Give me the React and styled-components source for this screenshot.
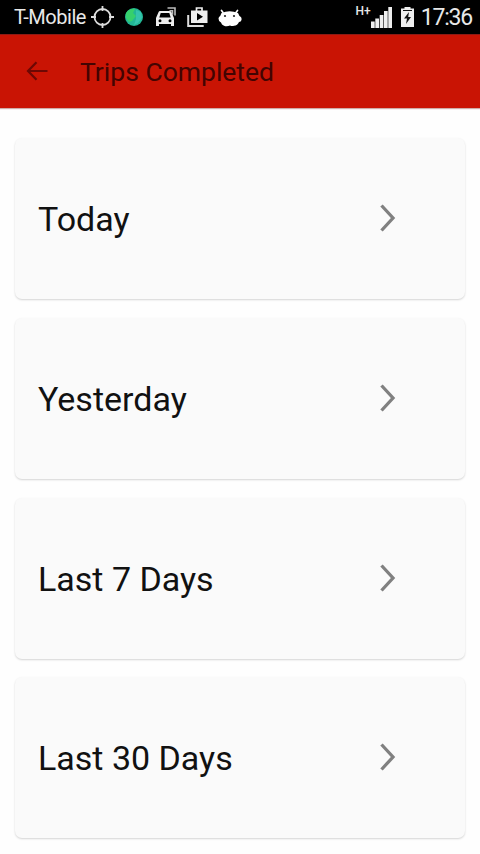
import React, {useState} from 'react';
import styled, {createGlobalStyle} from 'styled-components';

const GlobalStyle = createGlobalStyle`
* {
box-sizing: border-box;
}

body {
margin: 0;
background: #fefefe;
font-family: Roboto, sans-serif;
}
`;

const Screen = styled.div`
width: 480px;
height: 854px;
overflow: hidden;
display: flex;
flex-direction: column;
`;

const StatusBar = styled.div`
height: 34px;
flex: none;
display: flex;
align-items: center;
padding: 0 8px 0 14px;
background: #000;
color: #e8e8e8;
`;

const Carrier = styled.span`
width: 77px;
font-size: 20px;
line-height: 35px;
letter-spacing: -0.45px;
white-space: nowrap;
`;

const StatusIcons = styled.div`
display: flex;
align-items: center;
gap: 8px;
`;

const StatusRight = styled.div`
display: flex;
align-items: center;
margin-left: auto;
`;

const NetworkType = styled.span`
align-self: flex-start;
margin-top: 4px;
font-size: 12px;
line-height: 14px;
font-weight: 500;
`;

const Icon = styled.svg`
display: block;
flex: none;
margin-left: ${props => props.$left || 0}px;
`;

const Clock = styled.span`
margin-left: 7px;
font-size: 23px;
line-height: 35px;
letter-spacing: -1.2px;
white-space: nowrap;
`;

const Header = styled.header`
height: 74px;
flex: none;
display: flex;
align-items: center;
padding-left: 26px;
background: #c91404;
border-top: 1px solid #8e1a14;
box-shadow: 0 1px 1px rgba(120, 20, 10, 0.35);
`;

const BackButton = styled.button`
display: flex;
padding: 0 0 2px;
border: 0;
background: none;
`;

const Title = styled.h1`
margin: 0 0 0 32px;
font-size: 26.5px;
line-height: 32px;
font-weight: 400;
color: #430402;
white-space: nowrap;
`;

const TripsList = styled.main`
display: flex;
flex-direction: column;
gap: 18.8px;
padding: 30px 15px 0;
`;

const TripsCard = styled.div`
height: 161px;
flex: none;
display: flex;
align-items: center;
justify-content: space-between;
padding: 0 69px 0 23px;
border-radius: 7px;
background: #fafafa;
box-shadow: 0 1px 2px rgba(0, 0, 0, 0.17);
`;

const TripsLabel = styled.span`
padding-top: 1px;
font-size: 34px;
line-height: 40px;
color: #111;
white-space: nowrap;
`;

const ChevronWrapper = styled.div`
padding-bottom: 1px;
`;

const periods = ['Today', 'Yesterday', 'Last 7 Days', 'Last 30 Days'];

const LocationIcon = () => (
    <Icon width="23" height="24" viewBox="0 0 23 24" fill="none" stroke="#ddd" strokeWidth="1.800">
        <circle cx="11.5" cy="12" r="8"/>
        <path d="M11.5 1v5M11.5 18v5M0 12h5M18 12h5"/>
    </Icon>
);

const GlobeIcon = () => (
    <Icon width="20" height="20" viewBox="0 0 20 20" $left={2}>
        <circle cx="10" cy="10" r="9" fill="#22b795"/>
        <path d="M2 6q4-5 9-4l-2 4 3 3-4 5-3 1-3-4z" fill="#36d06c"/>
        <path d="M12 3l5 2 1 6-4 5-4 2 2-6z" fill="#35c4ad"/>
    </Icon>
);

const CarIcon = () => (
    <Icon width="21" height="20" viewBox="0 0 21 20" $left={4}>
        <path fill="#eee" fillRule="evenodd" d="M4 4h10q1 0 1.400 1L18 11v8h-3v-2H3v2H0v-8l2.600-6Q3 4 4 4zm.7 2L3.300 10.500h11.400L13.300 6zM4 12.200a1.500 1.500 0 100 3 1.500 1.500 0 000-3zm10 0a1.500 1.500 0 100 3 1.500 1.500 0 000-3z"/>
        <path fill="none" stroke="#bbb" strokeWidth="1.600" d="M11.500 1H19v7.500M13.500 3.800h3v4"/>
    </Icon>
);

const PlayStoreIcon = () => (
    <Icon width="21" height="21" viewBox="0 0 21 21" $left={2}>
        <path fill="none" stroke="#ddd" strokeWidth="2" d="M1.200 8v11h15.500"/>
        <path fill="none" stroke="#eee" strokeWidth="1.700" d="M9.500 4V1h5.500v3"/>
        <path fill="#eee" fillRule="evenodd" d="M4 3.500h16.500V16H4zm6 2.500v7.500l6-3.700z"/>
    </Icon>
);

const AndroidIcon = () => (
    <Icon width="24" height="19" viewBox="0 0 24 19" $left={2}>
        <path stroke="#fff" strokeWidth="1.700" strokeLinecap="round" d="M5 4.500L3.500 2.500M18 4.500l1.500-2"/>
        <path fill="#fff" d="M3.500 5Q11.500 1.500 20 5l1.500 3q2.500 1 2 4-.5 2-2.500 2-1.500 3.500-5 3.800-2 .7-4-.3-3 1.500-6 .3-2.500-1-3-3.300Q.500 13.500.500 10.500q.200-2 1.700-2.500z"/>
        <circle cx="7" cy="8" r="1.100" fill="#222"/>
        <circle cx="16" cy="8" r="1.100" fill="#222"/>
    </Icon>
);

const SignalIcon = () => (
    <Icon width="21" height="21" viewBox="0 0 21 21" fill="#eee">
        <path d="M0 14.500h3.700V21H0zM4.300 11.500H8V21H4.300zM8.700 8h3.700v13H8.700zM13 4h3.700v17H13zM17.300 0H21v21h-3.700z"/>
    </Icon>
);

const BatteryIcon = () => (
    <Icon width="13" height="20" viewBox="0 0 13 20" $left={9}>
        <path fill="#eee" d="M3.500 0h6v1.500H13V20H0V1.500h3.500z"/>
        <path fill="#111" d="M2 3h9v1H2zM8 5l-5 6.500h3L5 17l5-7H7.200z"/>
    </Icon>
);

const BackIcon = () => (
    <Icon width="22" height="20" viewBox="0 0 22 20" fill="none" stroke="#6d0804" strokeWidth="2.200">
        <path d="M21.500 10H2M10.500 1.200L2 10l8.500 8.800"/>
    </Icon>
);

const ChevronIcon = () => (
    <Icon width="16" height="28" viewBox="0 0 16 28" fill="none" stroke="#808080" strokeWidth="3.300">
        <path d="M1.500 1.500L13 14l-11.500 12.500"/>
    </Icon>
);

const App = () => {
    const [selectedPeriod, setSelectedPeriod] = useState(null);

    return (
        <Screen>
            <GlobalStyle/>
            <StatusBar>
                <Carrier>T-Mobile</Carrier>
                <StatusIcons>
                    <LocationIcon/>
                    <GlobeIcon/>
                    <CarIcon/>
                    <PlayStoreIcon/>
                    <AndroidIcon/>
                </StatusIcons>
                <StatusRight>
                    <NetworkType>H+</NetworkType>
                    <SignalIcon/>
                    <BatteryIcon/>
                    <Clock>17:36</Clock>
                </StatusRight>
            </StatusBar>
            <Header>
                <BackButton onClick={() => setSelectedPeriod(null)}>
                    <BackIcon/>
                </BackButton>
                <Title>Trips Completed</Title>
            </Header>
            <TripsList>
                {periods.map(period => (
                    <TripsCard
                        key={period}
                        aria-selected={period === selectedPeriod}
                        onClick={() => setSelectedPeriod(period)}>
                        <TripsLabel>{period}</TripsLabel>
                        <ChevronWrapper>
                            <ChevronIcon/>
                        </ChevronWrapper>
                    </TripsCard>
                ))}
            </TripsList>
        </Screen>
    )
};
export default App;
